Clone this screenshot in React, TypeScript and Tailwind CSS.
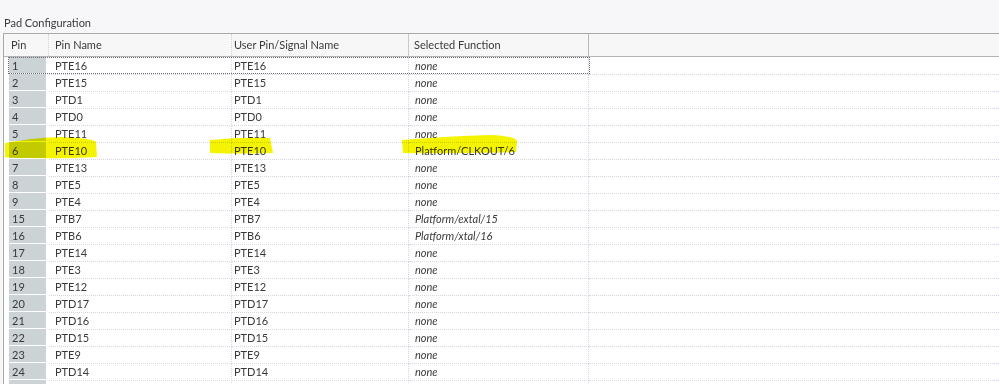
import React from "react";

type Row = { pin: string; name: string; user: string; fn: string; italic: boolean };

const rows: Row[] = [
  ["1", "PTE16", "none"],
  ["2", "PTE15", "none"],
  ["3", "PTD1", "none"],
  ["4", "PTD0", "none"],
  ["5", "PTE11", "none"],
  ["6", "PTE10", "Platform/CLKOUT/6"],
  ["7", "PTE13", "none"],
  ["8", "PTE5", "none"],
  ["9", "PTE4", "none"],
  ["15", "PTB7", "Platform/extal/15"],
  ["16", "PTB6", "Platform/xtal/16"],
  ["17", "PTE14", "none"],
  ["18", "PTE3", "none"],
  ["19", "PTE12", "none"],
  ["20", "PTD17", "none"],
  ["21", "PTD16", "none"],
  ["22", "PTD15", "none"],
  ["23", "PTE9", "none"],
  ["24", "PTD14", "none"],
  ["", "", ""],
].map(([pin, name, fn]) => ({ pin, name, user: name, fn, italic: fn !== "Platform/CLKOUT/6" }));

export default function App() {
  return (
    <div
      className="relative w-[999px] h-[384px] overflow-hidden bg-[#f7f6f8] text-[#3a3a3a]"
      style={{ fontFamily: "Lato, 'Liberation Sans', sans-serif", fontSize: "11px" }}
    >
      <div className="h-[33px] flex items-end pl-[4px] pb-[5px]">
        <span className="leading-none">Pad Configuration</span>
      </div>
      <div className="ml-[3px] border-l border-t border-[#a9a9a9] bg-white">
        {/* header */}
        <div className="grid grid-cols-[45px_183px_177px_180px_1fr] h-[23px] bg-[#f7f7f8] border-b border-[#b4b4b4] items-stretch">
          <div className="flex items-center pl-[7px] border-r border-dotted border-[#d0d0d8]">Pin</div>
          <div className="flex items-center pl-[6px] border-r border-dotted border-[#d0d0d8]">Pin Name</div>
          <div className="flex items-center pl-[2px] border-r border-[#c8c8d0]">User Pin/Signal Name</div>
          <div className="flex items-center pl-[5px] border-r border-[#b8b8b8]">Selected Function</div>
          <div />
        </div>
        {rows.map((r, i) => (
          <div key={i} className="relative grid grid-cols-[45px_183px_177px_180px_1fr] h-[17px]">
            <div className="pl-[5px] pr-[3px]">
              <div className="h-[16px] bg-[#cbd3d7] pl-[3px] leading-[17px]">{r.pin}</div>
            </div>
            <div className="pl-[6px] leading-[17px] border-b border-dotted border-[#d6d6e2] border-r">{r.name}</div>
            <div className="pl-[2px] leading-[17px] border-b border-dotted border-[#d6d6e2] border-r">{r.user}</div>
            <div className={`pl-[6px] leading-[17px] border-b border-dotted border-[#d6d6e2] border-r ${r.italic ? "italic" : ""}`}>{r.fn}</div>
            <div className="border-b border-dotted border-[#d6d6e2]" />
            {i === 0 && (
              <div className="absolute left-[4px] top-0 w-[582px] h-[17px] border border-dotted border-[#6a6a78] pointer-events-none" />
            )}
          </div>
        ))}
      </div>
      <svg className="absolute inset-0 pointer-events-none mix-blend-multiply" width="999" height="384">
        <path d="M5 143 Q40 137 62 137 Q92 138 96 142 L97 157 Q60 159 30 158 Q7 158 5 157 Z" fill="#f4f400" />
        <path d="M210 140 Q240 137 270 138 L273 153 Q240 154 210 153 Z" fill="#f4f400" />
        <path d="M402 140 Q450 136 490 135 Q515 136 517 141 L516 152 Q460 154 403 153 Z" fill="#f4f400" />
      </svg>
    </div>
  );
}
